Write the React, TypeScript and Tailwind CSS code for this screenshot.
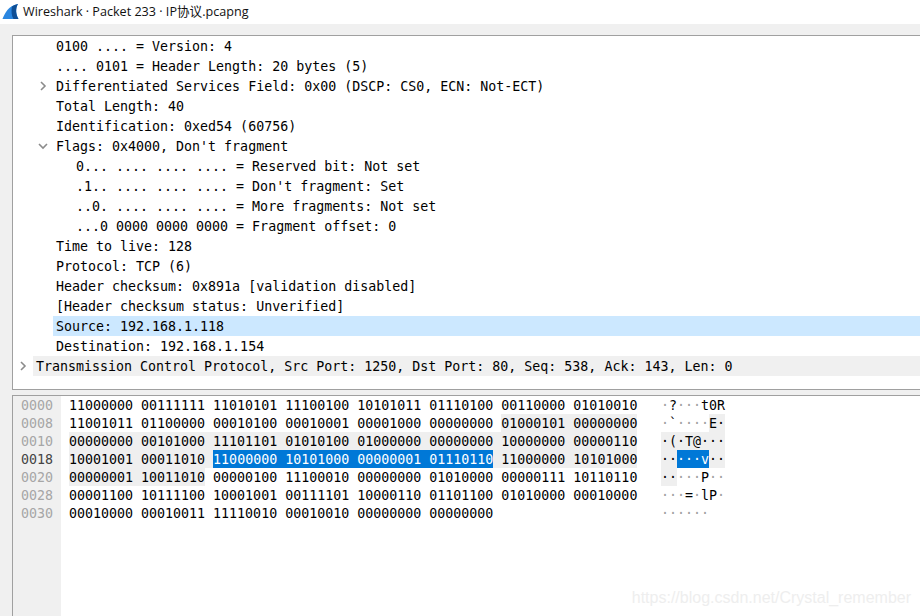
const TREE_ROWS: { text: string; indent: "base" | "sub"; chevron?: "right" | "down"; selected?: boolean }[] = [
  { text: "0100 .... = Version: 4", indent: "base" },
  { text: ".... 0101 = Header Length: 20 bytes (5)", indent: "base" },
  { text: "Differentiated Services Field: 0x00 (DSCP: CS0, ECN: Not-ECT)", indent: "base", chevron: "right" },
  { text: "Total Length: 40", indent: "base" },
  { text: "Identification: 0xed54 (60756)", indent: "base" },
  { text: "Flags: 0x4000, Don't fragment", indent: "base", chevron: "down" },
  { text: "0... .... .... .... = Reserved bit: Not set", indent: "sub" },
  { text: ".1.. .... .... .... = Don't fragment: Set", indent: "sub" },
  { text: "..0. .... .... .... = More fragments: Not set", indent: "sub" },
  { text: "...0 0000 0000 0000 = Fragment offset: 0", indent: "sub" },
  { text: "Time to live: 128", indent: "base" },
  { text: "Protocol: TCP (6)", indent: "base" },
  { text: "Header checksum: 0x891a [validation disabled]", indent: "base" },
  { text: "[Header checksum status: Unverified]", indent: "base" },
  { text: "Source: 192.168.1.118", indent: "base", selected: true },
  { text: "Destination: 192.168.1.154", indent: "base" },
];

type Kind = "plain" | "gray" | "blue";
type Seg = [string, Kind];

const HEX_ROWS: { offset: string; hex: Seg[]; ascii: Seg[]; active?: boolean }[] = [
  {
    offset: "0000",
    hex: [["11000000 00111111 11010101 11100100 10101011 01110100 00110000 01010010", "plain"]],
    ascii: [["·?···t0R", "plain"]],
  },
  {
    offset: "0008",
    hex: [
      ["11001011 01100000 00010100 00010001 00001000 00000000 ", "plain"],
      ["01000101 00000000", "gray"],
    ],
    ascii: [
      ["·`····", "plain"],
      ["E·", "gray"],
    ],
  },
  {
    offset: "0010",
    hex: [["00000000 00101000 11101101 01010100 01000000 00000000 10000000 00000110", "gray"]],
    ascii: [["·(·T@···", "gray"]],
  },
  {
    offset: "0018",
    active: true,
    hex: [
      ["10001001 00011010 ", "gray"],
      ["11000000 10101000 00000001 01110110", "blue"],
      [" 11000000 10101000", "gray"],
    ],
    ascii: [
      ["··", "gray"],
      ["···v", "blue"],
      ["··", "gray"],
    ],
  },
  {
    offset: "0020",
    hex: [
      ["00000001 10011010", "gray"],
      [" 00000100 11100010 00000000 01010000 00000111 10110110", "plain"],
    ],
    ascii: [
      ["··", "gray"],
      ["···P··", "plain"],
    ],
  },
  {
    offset: "0028",
    hex: [["00001100 10111100 10001001 00111101 10000110 01101100 01010000 00010000", "plain"]],
    ascii: [["···=·lP·", "plain"]],
  },
  {
    offset: "0030",
    hex: [["00010000 00010011 11110010 00010010 00000000 00000000", "plain"]],
    ascii: [["······", "plain"]],
  },
];

const KIND_CLASS: Record<Kind, string> = {
  plain: "",
  gray: "bg-[#efefef]",
  blue: "bg-[#0078d7] text-white",
};

function Chevron({ dir }: { dir: "right" | "down" }) {
  return (
    <svg width="10" height="10" viewBox="0 0 10 10" fill="none" stroke="#8c8c8c" strokeWidth="1.6">
      {dir === "right" ? <path d="M3 1 L7 5 L3 9" /> : <path d="M1 3 L5 7 L9 3" />}
    </svg>
  );
}

function SharkFin() {
  return (
    <svg width="17" height="17" viewBox="0 0 17 17" className="-mt-[2px]">
      <path d="M0.5 16 C3 10 6 3 16 1 C13.5 5 13.5 11 16.5 16 Z" fill="#2a86e0" />
      <path d="M10 3.5 C9 8 9.5 13 11.5 16 L16.5 16 C13.5 11 13.5 5 16 1 C13.5 1.5 11.5 2.3 10 3.5 Z" fill="#0f4f96" />
    </svg>
  );
}

function AsciiText({ text, kind }: { text: string; kind: Kind }) {
  // unprintable bytes show as grey dots outside the related-field shading
  return (
    <span className={`block h-[18px] leading-5 ${KIND_CLASS[kind]}`}>
      {text.split("").map((c, i) => (
        <span key={i} className={c === "·" && kind === "plain" ? "text-[#a0a0a0]" : ""}>
          {c}
        </span>
      ))}
    </span>
  );
}

export default function App() {
  return (
    <div className="relative flex h-[616px] w-[920px] flex-col overflow-hidden bg-[#f0f0f0] font-['DejaVu_Sans_Mono',monospace] text-[13.3px] text-black">
      {/* Title bar */}
      <div className="flex h-6 shrink-0 items-center bg-white pl-[2px] font-['Open_Sans','Noto_Sans_CJK_SC',sans-serif] text-[12.6px] text-[#111]">
        <SharkFin />
        <span className="ml-1 whitespace-pre">Wireshark · Packet 233 · IP协议.pcapng</span>
      </div>

      {/* Packet details */}
      <div className="ml-3 mt-[11px] h-[355px] shrink-0 border-y border-l border-[#a0a0a0] bg-white">
        {TREE_ROWS.map((r) => (
          <div key={r.text} className="relative flex h-5 items-center pl-10">
            {r.chevron && (
              <span className="absolute left-[25px] top-[5px]">
                <Chevron dir={r.chevron} />
              </span>
            )}
            <div className={`h-5 flex-1 whitespace-pre leading-[22px] ${r.selected ? "bg-[#cce8ff]" : ""} ${r.indent === "sub" ? "pl-[23px]" : "pl-[3px]"}`}>
              {r.text}
            </div>
          </div>
        ))}
        <div className="relative flex h-5 items-center pl-5">
          <span className="absolute left-[5px] top-[5px]">
            <Chevron dir="right" />
          </span>
          <div className="h-5 flex-1 whitespace-pre bg-[#f0f0f0] pl-[3px] leading-[22px]">
            Transmission Control Protocol, Src Port: 1250, Dst Port: 80, Seq: 538, Ack: 143, Len: 0
          </div>
        </div>
      </div>

      {/* Packet bytes */}
      <div className="ml-3 mt-[5px] flex min-h-0 flex-1 border-l border-t border-[#a0a0a0] bg-white">
        <div className="w-12 shrink-0 bg-[#f0f0f0] pl-2">
          {HEX_ROWS.map((r) => (
            <div key={r.offset} className={`h-[18px] leading-5 ${r.active ? "text-[#444]" : "text-[#a6a6a6]"}`}>
              {r.offset}
            </div>
          ))}
        </div>
        <div className="ml-2 w-[568px] shrink-0">
          {HEX_ROWS.map((r) => (
            <div key={r.offset} className="flex h-[18px] whitespace-pre">
              {r.hex.map(([t, k], i) => (
                <span key={i} className={`block h-[18px] leading-5 ${KIND_CLASS[k]}`}>
                  {t}
                </span>
              ))}
            </div>
          ))}
        </div>
        <div className="ml-6">
          {HEX_ROWS.map((r) => (
            <div key={r.offset} className="flex h-[18px] whitespace-pre">
              {r.ascii.map(([t, k], i) => (
                <AsciiText key={i} text={t} kind={k} />
              ))}
            </div>
          ))}
        </div>
      </div>

      {/* Watermark */}
      <div className="absolute bottom-[6px] right-[9px] font-['Liberation_Sans',sans-serif] text-[16px] text-[#eeeeee]">
        https://blog.csdn.net/Crystal_remember
      </div>
    </div>
  );
}
